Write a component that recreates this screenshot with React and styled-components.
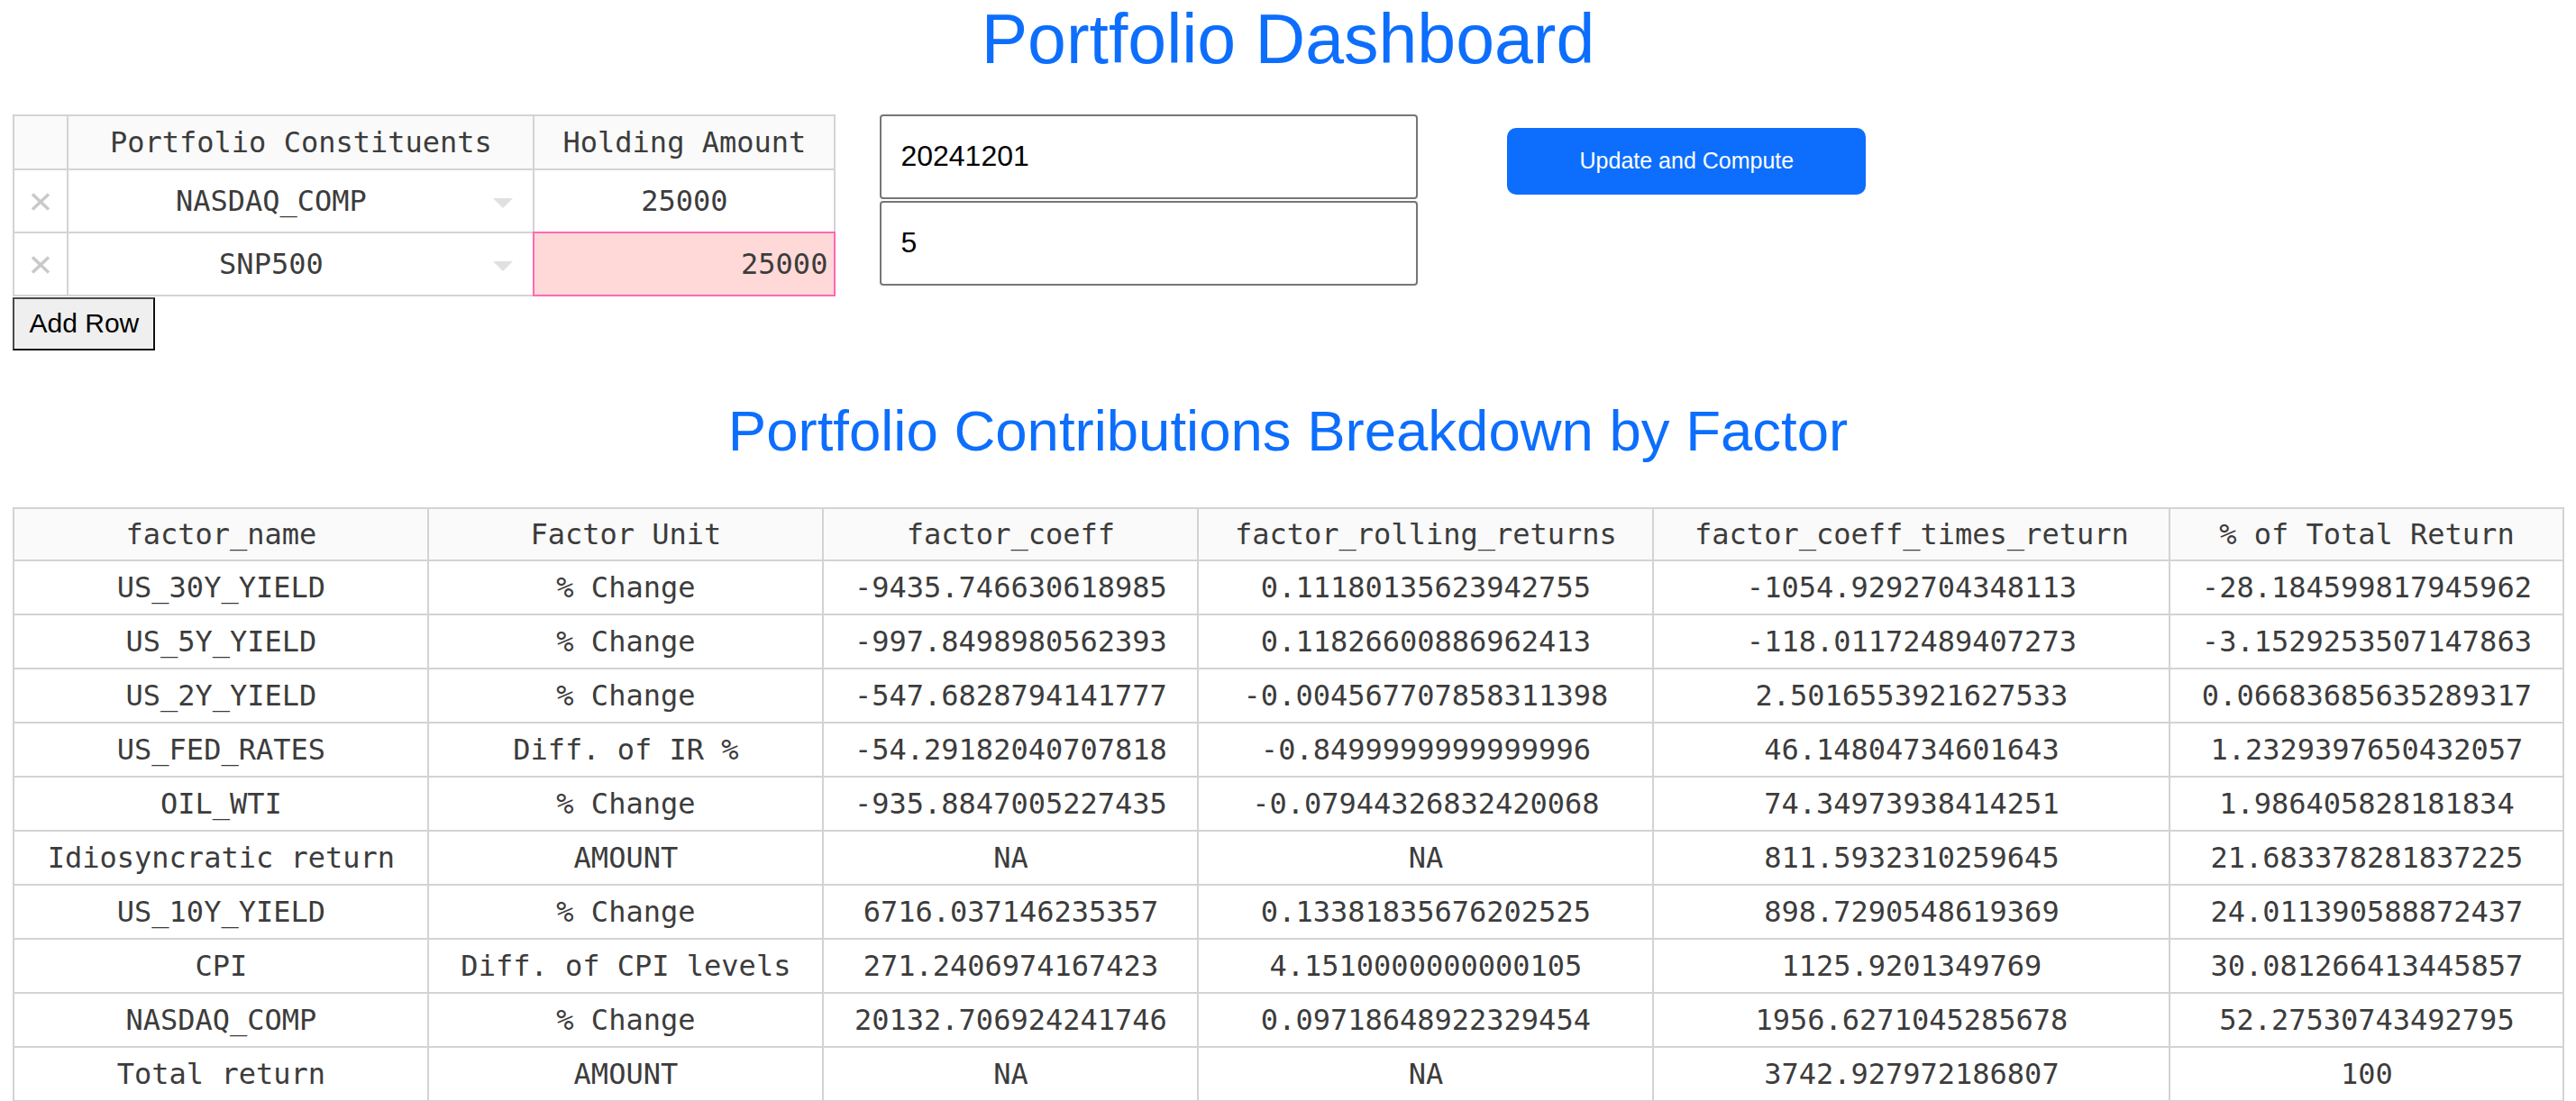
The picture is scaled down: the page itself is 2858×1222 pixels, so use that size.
import React from "react";
import styled, { createGlobalStyle } from "styled-components";

const GlobalStyle = createGlobalStyle`
  *, *::before, *::after { box-sizing: border-box; }
  html, body { margin: 0; padding: 0; background: #ffffff; }
  body { font-family: "Liberation Sans", Arial, sans-serif; }
`;

const BLUE = "#0d6efd";
const GRID = "#d3d3d3";
const CELL_TEXT = "rgb(60, 60, 60)";
const MONO = `"DejaVu Sans Mono", "Liberation Mono", monospace`;

const Page = styled.div`
  padding: 0 14.4px;
`;

const Title = styled.h1`
  margin: 0 0 40.5px;
  text-align: center;
  color: ${BLUE};
  font-family: "Liberation Sans", Arial, sans-serif;
  font-weight: 400;
  font-size: 77px;
  line-height: 1.12;
`;

const TopRow = styled.div`
  display: flex;
  align-items: flex-start;
`;

const HoldingsBlock = styled.div`
  display: flex;
  flex-direction: column;
  align-items: flex-start;
  gap: 1px;
`;

const Grid = styled.table`
  table-layout: fixed;
  border-collapse: separate;
  border-spacing: 0;
  width: ${(p) => p.$width};
  border-top: 2px solid ${GRID};
  border-left: 2px solid ${GRID};
  font-family: ${MONO};
  font-size: 32px;
  color: ${CELL_TEXT};
`;

const Col = styled.col`
  width: ${(p) => p.$w}px;
`;

const Row = styled.tr`
  height: ${(p) => p.$h}px;
`;

const HeadCell = styled.th`
  background: #fafafa;
  font-weight: 400;
  text-align: center;
  padding: 0 6px;
  white-space: nowrap;
  border-right: 2px solid ${GRID};
  border-bottom: 2px solid ${GRID};
`;

const Cell = styled.td`
  position: relative;
  padding: 0 ${(p) => (p.$align === "right" ? "7px" : "6px")};
  text-align: ${(p) => p.$align || "center"};
  white-space: nowrap;
  background: ${(p) => (p.$selected ? "rgb(255, 217, 215)" : "#ffffff")};
  border-right: 2px solid ${GRID};
  border-bottom: 2px solid ${GRID};

  &::after {
    content: "";
    display: ${(p) => (p.$selected ? "block" : "none")};
    position: absolute;
    top: -2px;
    left: -2px;
    right: -2px;
    bottom: -2px;
    border: 2px solid hotpink;
    pointer-events: none;
  }
`;

const DeleteCell = styled.td`
  padding: 0;
  text-align: center;
  border-right: 2px solid ${GRID};
  border-bottom: 2px solid ${GRID};
  background: #ffffff;
`;

const DeleteMark = styled.svg`
  display: block;
  margin: 2px auto 0;
`;

const DropdownCell = styled.td`
  padding: 0;
  border-right: 2px solid ${GRID};
  border-bottom: 2px solid ${GRID};
  background: #ffffff;
`;

const DropdownInner = styled.div`
  display: flex;
  align-items: center;
  height: 100%;
`;

const DropdownValue = styled.span`
  flex: 1;
  text-align: center;
  white-space: nowrap;
`;

const DropdownArrow = styled.span`
  width: 66px;
  display: flex;
  justify-content: center;
  align-items: center;
  padding-top: 6px;
`;

const AddRowButton = styled.button`
  height: 59px;
  width: 158px;
  padding: 0;
  font-family: "Liberation Sans", Arial, sans-serif;
  font-size: 30px;
  color: #000;
  background: #efefef;
  border: 2.5px solid;
  border-color: #4a4a4a #111111 #111111 #4a4a4a;
  border-radius: 0;
`;

const InputStack = styled.div`
  display: flex;
  flex-direction: column;
  gap: 2px;
  margin-left: 49px;
`;

const TextInput = styled.input`
  width: 597px;
  height: 94px;
  padding: 0 0 0 21px;
  border: 2px solid #767676;
  border-radius: 4px;
  font-family: "Liberation Sans", Arial, sans-serif;
  font-size: 32px;
  color: #000;
  background: #fff;
  outline: none;
`;

const ComputeButton = styled.button`
  margin: 15px 0 0 99px;
  width: 398px;
  height: 74px;
  border: none;
  border-radius: 10px;
  background: ${BLUE};
  color: #ffffff;
  font-family: "Liberation Sans", Arial, sans-serif;
  font-size: 25px;
`;

const SectionTitle = styled.h2`
  margin: 51px 0 47px;
  text-align: center;
  color: ${BLUE};
  font-family: "Liberation Sans", Arial, sans-serif;
  font-weight: 400;
  font-size: 63.5px;
  line-height: 1.2;
`;

const Arrow = () => (
  <svg width="22" height="11" viewBox="0 0 22 11">
    <polygon points="0,0 22,0 11,11" fill="#e0e0e0" />
  </svg>
);

const Cross = () => (
  <DeleteMark width="22" height="20" viewBox="0 0 22 20">
    <line x1="2" y1="1.5" x2="20" y2="18.5" stroke="#c9c9c9" strokeWidth="3.4" />
    <line x1="20" y1="1.5" x2="2" y2="18.5" stroke="#c9c9c9" strokeWidth="3.4" />
  </DeleteMark>
);

const holdings = [
  { name: "NASDAQ_COMP", amount: "25000", selected: false },
  { name: "SNP500", amount: "25000", selected: true },
];

const factorHeaders = [
  "factor_name",
  "Factor Unit",
  "factor_coeff",
  "factor_rolling_returns",
  "factor_coeff_times_return",
  "% of Total Return",
];

const factorWidths = [460, 438, 416, 505, 573, 437];

const factorRows = [
  ["US_30Y_YIELD", "% Change", "-9435.746630618985", "0.11180135623942755", "-1054.9292704348113", "-28.184599817945962"],
  ["US_5Y_YIELD", "% Change", "-997.8498980562393", "0.11826600886962413", "-118.01172489407273", "-3.1529253507147863"],
  ["US_2Y_YIELD", "% Change", "-547.6828794141777", "-0.004567707858311398", "2.5016553921627533", "0.06683685635289317"],
  ["US_FED_RATES", "Diff. of IR %", "-54.29182040707818", "-0.8499999999999996", "46.14804734601643", "1.2329397650432057"],
  ["OIL_WTI", "% Change", "-935.8847005227435", "-0.07944326832420068", "74.34973938414251", "1.986405828181834"],
  ["Idiosyncratic return", "AMOUNT", "NA", "NA", "811.5932310259645", "21.683378281837225"],
  ["US_10Y_YIELD", "% Change", "6716.037146235357", "0.13381835676202525", "898.7290548619369", "24.011390588872437"],
  ["CPI", "Diff. of CPI levels", "271.2406974167423", "4.1510000000000105", "1125.9201349769", "30.081266413445857"],
  ["NASDAQ_COMP", "% Change", "20132.706924241746", "0.09718648922329454", "1956.6271045285678", "52.27530743492795"],
  ["Total return", "AMOUNT", "NA", "NA", "3742.927972186807", "100"],
];

export default function App() {
  return (
    <>
      <GlobalStyle />
      <Page>
        <Title>Portfolio Dashboard</Title>
        <TopRow>
          <HoldingsBlock>
            <Grid $width="911px">
              <colgroup>
                <Col $w={60} />
                <Col $w={517} />
                <Col $w={334} />
              </colgroup>
              <thead>
                <Row $h={60}>
                  <HeadCell />
                  <HeadCell>Portfolio Constituents</HeadCell>
                  <HeadCell>Holding Amount</HeadCell>
                </Row>
              </thead>
              <tbody>
                {holdings.map((h) => (
                  <Row $h={70} key={h.name}>
                    <DeleteCell>
                      <Cross />
                    </DeleteCell>
                    <DropdownCell>
                      <DropdownInner>
                        <DropdownValue>{h.name}</DropdownValue>
                        <DropdownArrow>
                          <Arrow />
                        </DropdownArrow>
                      </DropdownInner>
                    </DropdownCell>
                    <Cell $selected={h.selected} $align={h.selected ? "right" : "center"}>
                      {h.amount}
                    </Cell>
                  </Row>
                ))}
              </tbody>
            </Grid>
            <AddRowButton>Add Row</AddRowButton>
          </HoldingsBlock>
          <InputStack>
            <TextInput defaultValue="20241201" />
            <TextInput defaultValue="5" />
          </InputStack>
          <ComputeButton>Update and Compute</ComputeButton>
        </TopRow>
        <SectionTitle>Portfolio Contributions Breakdown by Factor</SectionTitle>
        <Grid $width="100%">
          <colgroup>
            {factorWidths.map((w, i) => (
              <Col $w={w} key={i} />
            ))}
          </colgroup>
          <thead>
            <Row $h={58}>
              {factorHeaders.map((h) => (
                <HeadCell key={h}>{h}</HeadCell>
              ))}
            </Row>
          </thead>
          <tbody>
            {factorRows.map((r) => (
              <Row $h={60} key={r[0]}>
                {r.map((v, i) => (
                  <Cell key={i}>{v}</Cell>
                ))}
              </Row>
            ))}
          </tbody>
        </Grid>
      </Page>
    </>
  );
}
